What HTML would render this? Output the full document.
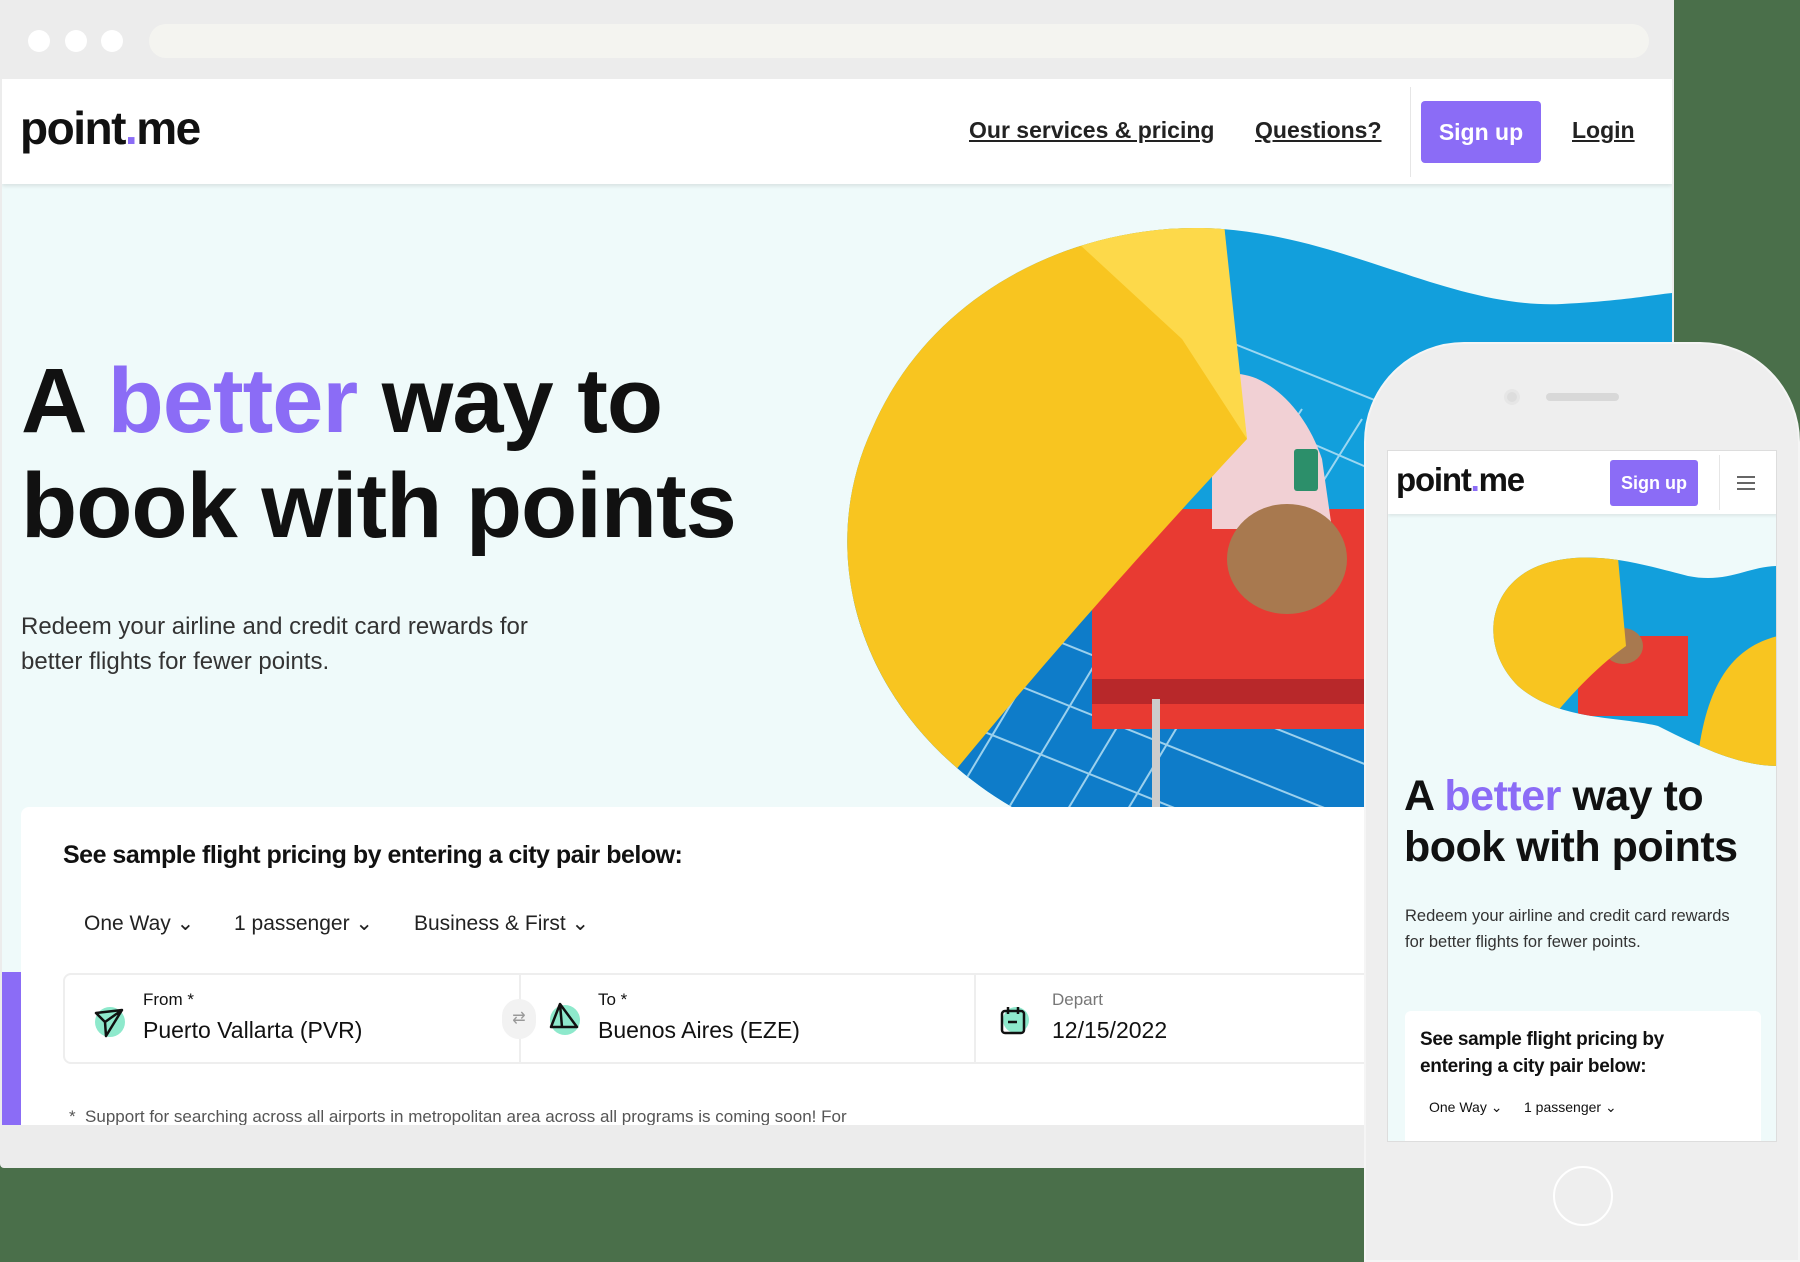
<!DOCTYPE html>
<html><head><meta charset="utf-8"><style>
*{margin:0;padding:0;box-sizing:border-box}
body{width:1800px;height:1252px;overflow:hidden;background:#4a6f4a;font-family:"Liberation Sans",sans-serif;position:relative;color:#111}
.abs{position:absolute}
a{color:#222;text-decoration:underline;font-weight:bold}
</style></head><body>
<div class="abs" style="left:0;top:0;width:1674px;height:1168px;background:#ececec;border-radius:0 0 4px 4px"></div>
<div class="abs" style="left:28px;top:30px;width:22px;height:22px;border-radius:50%;background:#fff"></div>
<div class="abs" style="left:65px;top:30px;width:22px;height:22px;border-radius:50%;background:#fff"></div>
<div class="abs" style="left:101px;top:30px;width:22px;height:22px;border-radius:50%;background:#fff"></div>
<div class="abs" style="left:149px;top:24px;width:1500px;height:34px;border-radius:17px;background:#f4f4f0"></div>
<div class="abs" style="left:2px;top:79px;width:1670px;height:1046px;background:#effafa;overflow:hidden">
  <div class="abs" style="left:0;top:0;width:1670px;height:105px;background:#fff;box-shadow:0 2px 4px rgba(0,0,0,.1);z-index:2"></div>
  <div class="abs" style="left:18px;top:22px;font-size:46px;font-weight:bold;letter-spacing:-1.5px;z-index:3">point<span style="color:#8b6cf6">.</span>me</div>
  <div class="abs" style="left:967px;top:38px;font-size:23px;z-index:3"><a>Our services &amp; pricing</a></div>
  <div class="abs" style="left:1253px;top:38px;font-size:23px;z-index:3"><a>Questions?</a></div>
  <div class="abs" style="left:1408px;top:8px;width:1px;height:90px;background:#e6e6e6;z-index:3"></div>
  <div class="abs" style="left:1419px;top:22px;width:120px;height:62px;background:#8b6cf6;border-radius:4px;color:#fff;font-size:23px;font-weight:bold;text-align:center;line-height:62px;z-index:3">Sign up</div>
  <div class="abs" style="left:1570px;top:38px;font-size:23px;z-index:3"><a>Login</a></div>
  <svg class="abs" style="left:0;top:0" width="1670" height="1046">
    <defs><clipPath id="b"><path d="M1010 728 C860 640 810 480 870 350 C930 210 1080 140 1220 150 C1350 160 1450 230 1560 225 C1620 222 1650 216 1670 214 L1670 728 Z"/></clipPath></defs>
    <g clip-path="url(#b)">
      <rect x="800" y="120" width="900" height="620" fill="#129fdc"/>
      <rect x="800" y="520" width="900" height="220" fill="#0e7cc9"/>
      <g stroke="#bfe6f7" stroke-width="2" opacity=".8">
        <path d="M900 560 L1400 760 M900 620 L1350 800 M900 500 L1500 740 M1000 460 L1600 700 M1100 420 L1670 640 M1220 260 L1670 440 M1230 330 L1670 520"/>
        <path d="M1000 740 L1120 540 M1060 740 L1180 540 M1120 740 L1240 540 M940 740 L1060 540 M1300 330 L1200 480 M1360 340 L1260 500"/>
      </g>
      <rect x="1090" y="430" width="300" height="220" fill="#e83a32"/>
      <rect x="1090" y="600" width="300" height="25" fill="#b8282a"/>
      <rect x="1150" y="620" width="8" height="110" fill="#ccc"/>
      <path d="M1210 300 C1250 280 1300 320 1320 380 L1330 450 L1210 450 Z" fill="#f1d0d4"/>
      <ellipse cx="1285" cy="480" rx="60" ry="55" fill="#a8794f"/>
      <rect x="1292" y="370" width="24" height="42" rx="3" fill="#2c8f6a"/>
      <path d="M800 120 L1222 145 C1230 230 1240 320 1245 360 C1180 430 1060 560 930 720 L800 740 Z" fill="#f8c520"/>
      <path d="M1050 140 L1222 145 L1245 360 L1180 260 Z" fill="#fdd94a"/>
    </g>
  </svg>
  <div class="abs" style="left:19px;top:270px;font-size:92px;line-height:105px;letter-spacing:-1px;font-weight:bold">A <span style="color:#8b6cf6">better</span> way to<br>book with points</div>
  <div class="abs" style="left:19px;top:530px;font-size:24px;line-height:35px;color:#333">Redeem your airline and credit card rewards for<br>better flights for fewer points.</div>
  <div class="abs" style="left:0;top:893px;width:20px;height:160px;background:#8b6cf6"></div>
  <div class="abs" style="left:19px;top:728px;width:1400px;height:330px;background:#fff;border-radius:8px">
    <div class="abs" style="left:42px;top:34px;font-size:25px;font-weight:bold;letter-spacing:-.5px">See sample flight pricing by entering a city pair below:</div>
    <div class="abs" style="left:63px;top:104px;font-size:21px;color:#222">One Way ⌄</div>
    <div class="abs" style="left:213px;top:104px;font-size:21px;color:#222">1 passenger ⌄</div>
    <div class="abs" style="left:393px;top:104px;font-size:21px;color:#222">Business &amp; First ⌄</div>
    <div class="abs" style="left:42px;top:166px;width:1400px;height:91px;border:2px solid #eee;border-radius:8px">
      <div class="abs" style="left:454px;top:0;width:2px;height:88px;background:#eee"></div>
      <div class="abs" style="left:909px;top:0;width:2px;height:88px;background:#eee"></div>
      <div class="abs" style="left:30px;top:32px;width:30px;height:30px;border-radius:50%;background:#8ee9cc"></div>
      <svg class="abs" style="left:28px;top:32px" width="32" height="32"><path d="M3 6 L29 3 L13 29 L12 15 Z M12 15 L29 3" fill="none" stroke="#111" stroke-width="2.5" stroke-linejoin="round"/></svg>
      <div class="abs" style="left:78px;top:15px;font-size:17px">From *</div>
      <div class="abs" style="left:78px;top:42px;font-size:23px">Puerto Vallarta (PVR)</div>
      <div class="abs" style="left:437px;top:24px;width:34px;height:40px;border-radius:17px;background:#f2f2f2;color:#999;font-size:16px;text-align:center;line-height:40px">⇄</div>
      <div class="abs" style="left:485px;top:30px;width:30px;height:30px;border-radius:50%;background:#8ee9cc"></div>
      <svg class="abs" style="left:483px;top:26px" width="32" height="32"><path d="M12 3 L29 26 L3 26 Z M12 3 L14 26" fill="none" stroke="#111" stroke-width="2.5" stroke-linejoin="round"/></svg>
      <div class="abs" style="left:533px;top:15px;font-size:17px">To *</div>
      <div class="abs" style="left:533px;top:42px;font-size:23px">Buenos Aires (EZE)</div>
      <div class="abs" style="left:938px;top:32px;width:26px;height:26px;border-radius:50%;background:#8ee9cc"></div>
      <svg class="abs" style="left:934px;top:30px" width="30" height="32"><rect x="3" y="6" width="22" height="22" rx="3" fill="none" stroke="#111" stroke-width="2.5"/><path d="M9 2 V9 M19 2 V9 M9 17 H18" stroke="#111" stroke-width="2.5"/></svg>
      <div class="abs" style="left:987px;top:15px;font-size:17px;color:#777">Depart</div>
      <div class="abs" style="left:987px;top:42px;font-size:23px">12/15/2022</div>
    </div>
    <div class="abs" style="left:48px;top:300px;font-size:17px;color:#555">*&nbsp; Support for searching across all airports in metropolitan area across all programs is coming soon! For</div>
  </div>
</div>
<div class="abs" style="left:1364px;top:342px;width:436px;height:920px;background:#eeeeee;border-radius:100px 100px 0 0;border:2px solid #f5f5f5"></div>
<div class="abs" style="left:1504px;top:389px;width:16px;height:16px;border-radius:50%;background:#ddd;border:3px solid #e6e6e6"></div>
<div class="abs" style="left:1546px;top:393px;width:73px;height:8px;border-radius:4px;background:#d8d8d8"></div>
<div class="abs" style="left:1553px;top:1166px;width:60px;height:60px;border-radius:50%;border:2px solid #fff"></div>
<div class="abs" style="left:1387px;top:450px;width:390px;height:692px;background:#effafa;overflow:hidden;border:1px solid #ddd">
  <div class="abs" style="left:0;top:0;width:390px;height:63px;background:#fff;box-shadow:0 2px 3px rgba(0,0,0,.08)"></div>
  <div class="abs" style="left:8px;top:10px;font-size:33px;font-weight:bold;letter-spacing:-1.2px">point<span style="color:#8b6cf6">.</span>me</div>
  <div class="abs" style="left:222px;top:9px;width:88px;height:46px;background:#8b6cf6;border-radius:3px;color:#fff;font-size:18px;font-weight:bold;text-align:center;line-height:46px">Sign up</div>
  <div class="abs" style="left:331px;top:4px;width:1px;height:55px;background:#e6e6e6"></div>
  <div class="abs" style="left:349px;top:25px;width:18px;height:2px;background:#666;box-shadow:0 6px 0 #666,0 12px 0 #666"></div>
  <svg class="abs" style="left:0;top:75px" width="390" height="290">
    <defs><clipPath id="m"><path d="M130 160 C90 120 100 60 150 40 C200 20 260 40 300 50 C340 58 360 40 390 40 L390 240 C350 240 310 220 270 200 C230 190 170 195 130 160 Z"/></clipPath></defs>
    <g clip-path="url(#m)">
      <rect x="80" y="30" width="320" height="260" fill="#129fdc"/>
      <rect x="190" y="110" width="110" height="80" fill="#e83a32"/>
      <ellipse cx="235" cy="120" rx="20" ry="18" fill="#a8794f"/>
      <path d="M80 30 L230 32 L238 120 C210 140 180 170 150 210 L80 210 Z" fill="#f8c520"/>
      <path d="M310 230 C320 150 350 120 390 110 L390 280 Z" fill="#f8c520"/>
    </g>
  </svg>
  <div class="abs" style="left:16px;top:320px;font-size:43px;line-height:51px;letter-spacing:-.5px;font-weight:bold">A <span style="color:#8b6cf6">better</span> way to<br>book with points</div>
  <div class="abs" style="left:17px;top:452px;font-size:16.5px;line-height:26px;color:#333">Redeem your airline and credit card rewards<br>for better flights for fewer points.</div>
  <div class="abs" style="left:17px;top:560px;width:356px;height:150px;background:#fff;border-radius:6px">
    <div class="abs" style="left:15px;top:15px;font-size:19px;line-height:27px;font-weight:bold;letter-spacing:-.3px">See sample flight pricing by<br>entering a city pair below:</div>
    <div class="abs" style="left:24px;top:88px;font-size:14px">One Way ⌄</div>
    <div class="abs" style="left:119px;top:88px;font-size:14px">1 passenger ⌄</div>
  </div>
</div>
</body></html>
